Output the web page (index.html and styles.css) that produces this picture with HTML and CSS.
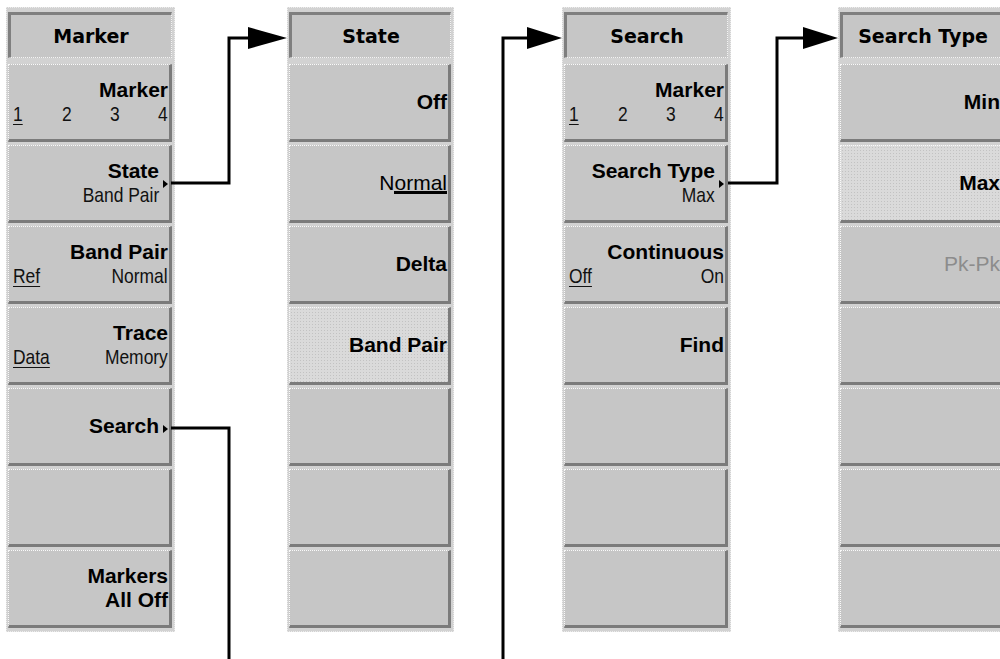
FILE: index.html
```html
<!DOCTYPE html>
<html>
<head>
<meta charset="utf-8">
<link rel="stylesheet" href="styles.css">
</head>
<body>
<div class="stage">
  <div class="panel col1">
    <div class="title">Marker</div>
    <div class="btn">
      <div class="lbl">Marker</div>
      <div class="row"><u>1</u><span>2</span><span>3</span><span>4</span></div>
    </div>
    <div class="btn sub">
      <div class="lbl">State</div>
      <div class="row end"><span>Band Pair</span></div>
      <span class="tri"></span>
    </div>
    <div class="btn">
      <div class="lbl">Band Pair</div>
      <div class="row"><u>Ref</u><span>Normal</span></div>
    </div>
    <div class="btn">
      <div class="lbl">Trace</div>
      <div class="row"><u>Data</u><span>Memory</span></div>
    </div>
    <div class="btn sub">
      <div class="lbl">Search</div>
      <span class="tri low"></span>
    </div>
    <div class="btn"></div>
    <div class="btn">
      <div class="lbl">Markers</div>
      <div class="lbl">All Off</div>
    </div>
  </div>

  <div class="panel col2">
    <div class="title">State</div>
    <div class="btn"><div class="lbl">Off</div></div>
    <div class="btn"><div class="lbl reg">N<span class="bar">ormal</span></div></div>
    <div class="btn"><div class="lbl">Delta</div></div>
    <div class="btn sel"><div class="lbl">Band Pair</div></div>
    <div class="btn"></div>
    <div class="btn"></div>
    <div class="btn"></div>
  </div>

  <div class="panel col3">
    <div class="title">Search</div>
    <div class="btn">
      <div class="lbl">Marker</div>
      <div class="row"><u>1</u><span>2</span><span>3</span><span>4</span></div>
    </div>
    <div class="btn sub">
      <div class="lbl">Search Type</div>
      <div class="row end"><span>Max</span></div>
      <span class="tri"></span>
    </div>
    <div class="btn">
      <div class="lbl">Continuous</div>
      <div class="row"><u>Off</u><span>On</span></div>
    </div>
    <div class="btn"><div class="lbl">Find</div></div>
    <div class="btn"></div>
    <div class="btn"></div>
    <div class="btn"></div>
  </div>

  <div class="panel col4">
    <div class="title">Search Type</div>
    <div class="btn"><div class="lbl">Min</div></div>
    <div class="btn sel"><div class="lbl">Max</div></div>
    <div class="btn"><div class="lbl reg dis">Pk-Pk</div></div>
    <div class="btn"></div>
    <div class="btn"></div>
    <div class="btn"></div>
    <div class="btn"></div>
  </div>

  <svg class="links" width="1000" height="659" viewBox="0 0 1000 659">
    <g fill="none" stroke="#000" stroke-width="3">
      <path d="M171 183 H229 V38 H250"/>
      <path d="M171 428 H229 V659"/>
      <path d="M503 659 V38 H529"/>
      <path d="M728 183 H777 V38 H805"/>
    </g>
    <g fill="#000">
      <polygon points="248,27 287,38 248,49"/>
      <polygon points="527,27 562,38 527,49"/>
      <polygon points="803,27 838,38 803,49"/>
    </g>
  </svg>
</div>
</body>
</html>
```

FILE: styles.css
```css
html, body {
  margin: 0;
  padding: 0;
  background: #fff;
  overflow: hidden;
}

.stage {
  position: relative;
  width: 1000px;
  height: 659px;
  overflow: hidden;
  display: flex;
  align-items: flex-start;
  padding-top: 7px;
  box-sizing: border-box;
}

.panel {
  flex: none;
  width: 169px;
  box-sizing: border-box;
  background: #d2d2d2;
  border: 1px dotted #ececec;
  padding: 4px 2px 3px 1px;
  display: flex;
  flex-direction: column;
  gap: 3px;
}

.col1 { margin-left: 6px; }
.col2 { margin-left: 112px; width: 167px; }
.col3 { margin-left: 108px; }
.col4 { margin-left: 107px; }

.title {
  height: 46px;
  box-sizing: border-box;
  background: #c6c6c6;
  border-top: 3px solid #7f7f7f;
  border-left: 3px solid #7f7f7f;
  border-right: 1px dotted #f4f4f4;
  border-bottom: 1px dotted #f4f4f4;
  margin-bottom: 3px;
  display: flex;
  align-items: center;
  justify-content: center;
  font: bold 19px/1 "DejaVu Sans", sans-serif;
  color: #000;
  white-space: nowrap;
}

.btn {
  position: relative;
  height: 78px;
  box-sizing: border-box;
  background: #c6c6c6;
  border-top: 1px dotted #fafafa;
  border-left: 1px dotted #fafafa;
  border-right: 3px solid #7b7b7b;
  border-bottom: 3px solid #7b7b7b;
  padding: 0 1px 0 4px;
  display: flex;
  flex-direction: column;
  justify-content: center;
  color: #000;
}

.btn.sel {
  background-color: #dadada;
  background-image: radial-gradient(circle, #c2c2c2 0.6px, transparent 0.9px);
  background-size: 3px 3px;
}

.lbl {
  font: bold 21px/24px "Liberation Sans", Arial, sans-serif;
  text-align: right;
  white-space: nowrap;
}

.lbl.reg {
  font-weight: normal;
}

.lbl.dis {
  color: #8c8c8c;
}

.bar {
  display: inline-block;
  line-height: 17px;
  border-bottom: 3px solid #000;
}

.row {
  display: flex;
  justify-content: space-between;
  font: 21px/24px "Liberation Sans", Arial, sans-serif;
  color: #111;
  white-space: nowrap;
}

.row > * {
  transform: scaleX(0.83);
  transform-origin: center;
}

.row > :first-child {
  transform-origin: left center;
}

.row > :last-child {
  transform-origin: right center;
}

.row.end {
  justify-content: flex-end;
}

.row.end > :first-child {
  transform-origin: right center;
}

.row u {
  text-decoration: underline;
  text-decoration-thickness: 1px;
  text-underline-offset: 3px;
}

.btn.sub .lbl,
.btn.sub .row {
  padding-right: 9px;
}

.tri {
  position: absolute;
  right: 1px;
  top: 34px;
  width: 0;
  height: 0;
  border-left: 5px solid #000;
  border-top: 4px solid transparent;
  border-bottom: 4px solid transparent;
}

.tri.low {
  top: 36px;
}

.links {
  position: absolute;
  left: 0;
  top: 0;
  pointer-events: none;
}
```
